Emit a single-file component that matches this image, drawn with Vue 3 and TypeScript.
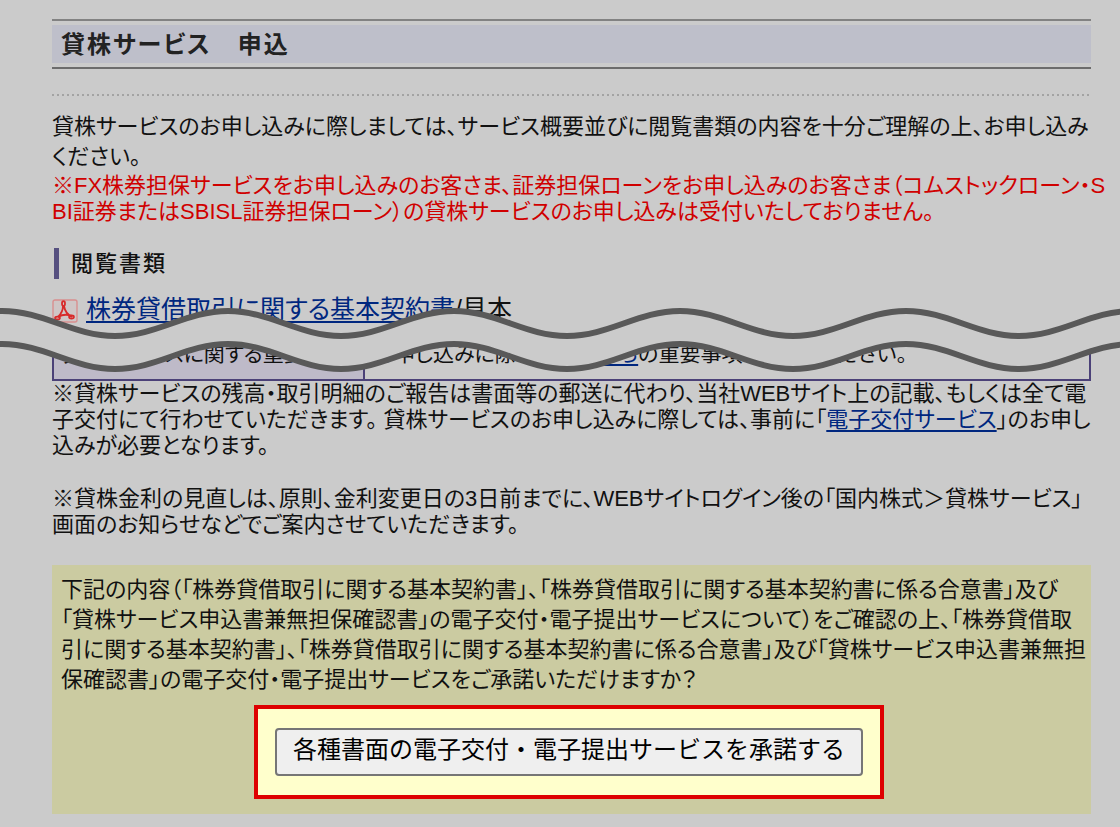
<script setup lang="ts">
const introLines: string[] = [
  '貸株サービスのお申し込みに際しましては、サービス概要並びに閲覧書類の内容を十分ご理解の上、お申し込み',
  'ください。',
]
const warningLines: string[] = [
  '※FX株券担保サービスをお申し込みのお客さま、証券担保ローンをお申し込みのお客さま（コムストックローン・S',
  'BI証券またはSBISL証券担保ローン）の貸株サービスのお申し込みは受付いたしておりません。',
]
const rateLines: string[] = [
  '※貸株金利の見直しは、原則、金利変更日の3日前までに、WEBサイトログイン後の「国内株式＞貸株サービス」',
  '画面のお知らせなどでご案内させていただきます。',
]
const consentLines: string[] = [
  '下記の内容（「株券貸借取引に関する基本契約書」、「株券貸借取引に関する基本契約書に係る合意書」及び',
  '「貸株サービス申込書兼無担保確認書」の電子交付・電子提出サービスについて）をご確認の上、「株券貸借取',
  '引に関する基本契約書」、「株券貸借取引に関する基本契約書に係る合意書」及び「貸株サービス申込書兼無担',
  '保確認書」の電子交付・電子提出サービスをご承諾いただけますか？',
]

// The torn strip: two parallel waves built from half periods.
const half = 113
const count = 14
const startX = -224
const upperY = 5
const lowerY = 38

function halves(dir: number): string {
  let d = ''
  for (let i = 0; i < count; i++) {
    const dy = i % 2 === 0 ? 25 : -25
    d += ` c${42 * dir} 0 ${(half - 42) * dir} ${dy} ${half * dir} ${dy}`
  }
  return d
}
const upper = `M${startX} ${upperY}${halves(1)}`
const lower = `M${startX} ${lowerY}${halves(1)}`
const band = `${upper} V${lowerY}${halves(-1)} Z`
</script>

<template>
  <main class="page">
    <header class="title">
      <h1>貸株サービス　申込</h1>
    </header>
    <div class="dots"></div>

    <p class="text loose"><span v-for="l in introLines" :key="l" class="line">{{ l }}</span></p>
    <p class="text red"><span v-for="l in warningLines" :key="l" class="line">{{ l }}</span></p>

    <h2>閲覧書類</h2>

    <section class="cut">
      <div class="doc">
        <svg class="pdf" viewBox="0 0 26 24" aria-hidden="true">
          <rect x="1" y="1" width="24" height="22" rx="2" fill="#cfc6c6" stroke="#d98f8f" stroke-width="1.4" />
          <g fill="none" stroke="#d82a2a" stroke-width="1.8">
            <path d="M11 7 C11 12 9 15 6 18 M12 7 C13 13 16 16 20 18 M6 18 C11 15 15 15 20 17" />
            <ellipse cx="11.5" cy="4.5" rx="1.5" ry="2.4" />
            <ellipse cx="5.5" cy="19" rx="2.4" ry="1.4" />
            <ellipse cx="19.5" cy="18" rx="2.4" ry="1.5" />
          </g>
        </svg>
        <span class="line"><a href="#">株券貸借取引に関する基本契約書</a>/見本</span>
      </div>
      <table>
        <tbody>
          <tr>
            <th scope="row">貸株サービスに関する重要事項</th>
            <td>お申し込みに際しては、<a href="#">こちら</a>の重要事項をご確認ください。</td>
          </tr>
        </tbody>
      </table>
      <svg class="waves" viewBox="0 0 1120 68" preserveAspectRatio="none" aria-hidden="true">
        <path :d="band" fill="#cbcbcb" />
        <path :d="upper" fill="none" stroke="#595959" stroke-width="6" />
        <path :d="lower" fill="none" stroke="#595959" stroke-width="6" />
      </svg>
    </section>

    <p class="text">
      <span class="line">※貸株サービスの残高・取引明細のご報告は書面等の郵送に代わり、当社WEBサイト上の記載、もしくは全て電</span>
      <span class="line">子交付にて行わせていただきます。 貸株サービスのお申し込みに際しては、事前に「<a href="#">電子交付サービス</a>」のお申し</span>
      <span class="line">込みが必要となります。</span>
    </p>
    <p class="text rate"><span v-for="l in rateLines" :key="l" class="line">{{ l }}</span></p>

    <section class="consent">
      <p class="text loose"><span v-for="l in consentLines" :key="l" class="line">{{ l }}</span></p>
      <div class="frame">
        <button type="button">各種書面の電子交付・電子提出サービスを承諾する</button>
      </div>
    </section>
  </main>
</template>

<style>
body {
  margin: 0;
  background: #cbcbcb;
}
</style>

<style scoped>
.page {
  box-sizing: border-box;
  padding: 19px 29px 12px 52px;
  font-family: "Liberation Sans", "Noto Sans CJK JP", sans-serif;
  font-size: 22px;
  line-height: 26px;
  font-feature-settings: "palt";
  color: #111;
}
.title {
  border-top: 2px solid #828282;
  border-bottom: 2px solid #6c6c6c;
  padding: 4px 0;
}
h1 {
  margin: 0;
  padding: 1px 9px 0;
  background: #bebfca;
  font-size: 24px;
  font-weight: 700;
  line-height: 37px;
  letter-spacing: 2px;
  color: #222;
}
.dots {
  height: 2px;
  margin: 25px 0 16px;
  background: repeating-linear-gradient(90deg, #a3a3a3 0 2px, transparent 2px 5px);
}
.text {
  margin: 0;
}
.loose {
  line-height: 30px;
}
.line {
  display: block;
  white-space: nowrap;
}
.red {
  margin-top: 1px;
  color: #d00000;
}
h2 {
  margin: 23px 0 0 2px;
  padding-left: 12px;
  border-left: 5px solid #565080;
  font-size: 22px;
  font-weight: 500;
  line-height: 31px;
  letter-spacing: 2px;
}
a {
  color: #00277f;
  text-decoration: underline;
  text-decoration-thickness: 2px;
  text-underline-offset: 3px;
}
.cut {
  position: relative;
  margin: 15px -29px 0 -52px;
  padding: 0 29px 0 52px;
}
.doc {
  display: flex;
  align-items: center;
  gap: 8px;
  font-size: 25px;
  line-height: 30px;
}
.pdf {
  width: 26px;
  height: 24px;
  margin-top: 4px;
}
table {
  width: 100%;
  margin-top: 13px;
  border-collapse: collapse;
  table-layout: fixed;
  font-size: 21px;
}
th,
td {
  border: 2px solid #4b4178;
  padding: 2px 9px 12px;
  text-align: left;
  font-weight: 400;
  white-space: nowrap;
}
th {
  width: 30%;
  box-sizing: border-box;
  background: #bebac8;
}
.waves {
  position: absolute;
  left: 0;
  top: 12px;
  width: 100%;
  height: 68px;
}
.rate {
  margin-top: 27px;
}
.consent {
  margin-top: 27px;
  padding: 10px 14px 15px 9px;
  background: #cbcba1;
}
.frame {
  box-sizing: border-box;
  width: fit-content;
  margin: 10px auto 0;
  padding: 19px 17px;
  border: 4px solid #de0000;
  background: #ffffcc;
}
button {
  display: block;
  padding: 0 16px 8px;
  border: 2px solid #767676;
  border-radius: 4px;
  background: #efefef;
  color: #000;
  font-family: "Noto Sans CJK JP", sans-serif;
  font-feature-settings: normal;
  font-size: 24px;
  line-height: 36px;
  white-space: nowrap;
}
</style>
